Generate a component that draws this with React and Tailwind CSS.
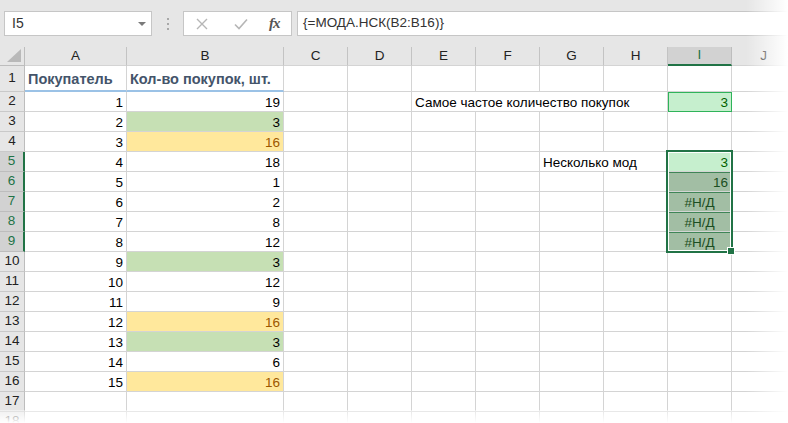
import React from "react";

const COLS = [
  { k: "A", w: 102 },
  { k: "B", w: 157 },
  { k: "C", w: 64 },
  { k: "D", w: 64 },
  { k: "E", w: 64 },
  { k: "F", w: 64 },
  { k: "G", w: 64 },
  { k: "H", w: 64 },
  { k: "I", w: 64 },
  { k: "J", w: 64 },
];

const DATA = [
  // [rowNo, A, B, Bstyle]
  [2, 1, 19, ""],
  [3, 2, 3, "g"],
  [4, 3, 16, "y"],
  [5, 4, 18, ""],
  [6, 5, 1, ""],
  [7, 6, 2, ""],
  [8, 7, 8, ""],
  [9, 8, 12, ""],
  [10, 9, 3, "g"],
  [11, 10, 12, ""],
  [12, 11, 9, ""],
  [13, 12, 16, "y"],
  [14, 13, 3, "g"],
  [15, 14, 6, ""],
  [16, 15, 16, "y"],
  [17, "", "", ""],
  [18, "", "", ""],
];

const base =
  "shrink-0 h-full border-r border-b border-[#d4d4d4] flex items-end pb-[1px] px-[3px] leading-[15px] text-[13.5px] whitespace-nowrap";

function Cell({ w, className = "", children }) {
  return (
    <div className={`${base} ${className}`} style={{ width: w }}>
      {children}
    </div>
  );
}

function RowHeader({ n, selected }) {
  return (
    <div
      className={
        selected
          ? "shrink-0 w-[25px] h-full flex items-center justify-center bg-[#d2d2d2] text-[#217346] border-b border-[#bdbdbd] border-r-2 border-r-[#217346] text-[13.5px]"
          : "shrink-0 w-[25px] h-full flex items-center justify-center bg-[#e6e6e6] text-[#222] border-b border-[#c9c9c9] border-r border-r-[#bdbdbd] text-[13.5px]"
      }
    >
      {n}
    </div>
  );
}

function DataRow({ row }) {
  const [n, a, b, st] = row;
  const sel = n >= 5 && n <= 9;
  const bCls =
    st === "g"
      ? "bg-[#c6e0b4] text-black justify-end"
      : st === "y"
      ? "bg-[#ffe89c] text-[#9c5700] justify-end"
      : "text-black justify-end";
  const cells = [
    <Cell key="A" w={102} className="justify-end text-black">
      {a}
    </Cell>,
    <Cell key="B" w={157} className={bCls}>
      {b}
    </Cell>,
    <Cell key="C" w={64} />,
    <Cell key="D" w={64} />,
  ];
  if (n === 2) {
    cells.push(
      <Cell key="E" w={256} className="text-black">
        Самое частое количество покупок
      </Cell>
    );
  } else if (n === 5) {
    cells.push(<Cell key="E" w={64} />, <Cell key="F" w={64} />);
    cells.push(
      <Cell key="G" w={128} className="text-black">
        Несколько мод
      </Cell>
    );
  } else {
    cells.push(
      <Cell key="E" w={64} />,
      <Cell key="F" w={64} />,
      <Cell key="G" w={64} />,
      <Cell key="H" w={64} />
    );
  }
  // column I
  if (n === 2) {
    cells.push(
      <Cell
        key="I"
        w={64}
        className="justify-end bg-[#c6efce] text-[#006100] outline outline-1 outline-[#2fb35a] -outline-offset-1"
      >
        3
      </Cell>
    );
  } else if (n === 5) {
    cells.push(
      <Cell key="I" w={64} className="justify-end bg-[#c6efce] text-[#006100]">
        3
      </Cell>
    );
  } else if (n === 6) {
    cells.push(
      <Cell key="I" w={64} className="justify-end bg-[#a2bea4] text-[#1c4f22] border-t border-t-[#3f8557]">
        16
      </Cell>
    );
  } else if (n >= 7 && n <= 9) {
    cells.push(
      <Cell key="I" w={64} className="justify-center bg-[#a2bea4] text-[#1c4f22] border-t border-t-[#3f8557]">
        #Н/Д
      </Cell>
    );
  } else {
    cells.push(<Cell key="I" w={64} />);
  }
  cells.push(<Cell key="J" w={64} />);

  return (
    <div className="flex h-[20px]">
      <RowHeader n={n} selected={sel} />
      {cells}
    </div>
  );
}

export default function App() {
  return (
    <div className="relative w-[788px] h-[423px] overflow-hidden bg-white font-['Liberation_Sans',Arial,sans-serif] text-black">
      {/* Toolbar / formula bar */}
      <div className="h-[47px] bg-[#e6e6e6] flex items-start pt-[11px] pl-[4px]">
        <div className="shrink-0 w-[148px] h-[25px] bg-white border border-[#c6c6c6] flex items-center justify-between pl-[7px] pr-[4px] text-[14px] text-[#333]">
          <span>I5</span>
          <svg width="10" height="6" viewBox="0 0 10 6">
            <path d="M1 1 L9 1 L5 5 Z" fill="#7a7a7a" />
          </svg>
        </div>
        <div className="shrink-0 w-[31px] h-[25px] flex flex-col items-center justify-center gap-[3px]">
          <span className="w-[2px] h-[2px] bg-[#a8a8a8]" />
          <span className="w-[2px] h-[2px] bg-[#a8a8a8]" />
          <span className="w-[2px] h-[2px] bg-[#a8a8a8]" />
        </div>
        <div className="shrink-0 w-[109px] h-[25px] bg-white border border-[#c6c6c6] flex items-center">
          <svg className="ml-[12px]" width="12" height="12" viewBox="0 0 12 12">
            <path d="M1 1 L11 11 M11 1 L1 11" stroke="#b6b6b6" strokeWidth="1.4" fill="none" />
          </svg>
          <svg className="ml-[26px]" width="14" height="12" viewBox="0 0 14 12">
            <path d="M1 6.5 L5 10.5 L13 1.5" stroke="#b6b6b6" strokeWidth="1.6" fill="none" />
          </svg>
          <span className="ml-[21px] font-['Liberation_Serif',serif] italic font-bold text-[15px] text-[#555] leading-none tracking-[-1px]">
            fx
          </span>
        </div>
        <div className="ml-[5px] flex-1 h-[25px] bg-white border border-[#c6c6c6] border-r-0 flex items-center pl-[5px] text-[13.5px] text-[#333]">
          {"{=МОДА.НСК(B2:B16)}"}
        </div>
      </div>

      {/* Column headers */}
      <div className="flex h-[19px] bg-[#e6e6e6]">
        <div className="shrink-0 w-[25px] h-full border-r border-b border-[#bdbdbd] flex items-end justify-end pr-[3px] pb-[3px]">
          <svg width="14" height="13" viewBox="0 0 14 13">
            <path d="M14 0 L14 13 L0 13 Z" fill="#b9b9b9" />
          </svg>
        </div>
        {COLS.map((c) =>
          c.k === "I" ? (
            <div
              key={c.k}
              className="shrink-0 h-full flex items-center justify-center bg-[#d2d2d2] text-[#217346] border-r border-[#bdbdbd] border-b-2 border-b-[#217346] text-[13.5px]"
              style={{ width: c.w }}
            >
              {c.k}
            </div>
          ) : (
            <div
              key={c.k}
              className="shrink-0 h-full flex items-center justify-center text-[#222] border-r border-b border-[#c3c3c3] border-b-[#d4d4d4] text-[13.5px]"
              style={{ width: c.w }}
            >
              {c.k}
            </div>
          )
        )}
      </div>

      {/* Row 1 */}
      <div className="flex h-[26px]">
        <RowHeader n={1} />
        <div className="shrink-0 w-[102px] h-full border-r border-[#d4d4d4] border-b-2 border-b-[#9bc2e6] flex items-end pb-[2px] px-[3px] leading-[17px] text-[14.5px] font-bold text-[#44546a] whitespace-nowrap">
          Покупатель
        </div>
        <div className="shrink-0 w-[157px] h-full border-r border-[#d4d4d4] border-b-2 border-b-[#9bc2e6] flex items-end pb-[2px] px-[3px] leading-[17px] text-[14.5px] font-bold text-[#44546a] whitespace-nowrap">
          Кол-во покупок, шт.
        </div>
        {COLS.slice(2).map((c) => (
          <Cell key={c.k} w={c.w} />
        ))}
      </div>

      {DATA.map((r) => (
        <DataRow key={r[0]} row={r} />
      ))}

      {/* Selection border I5:I9 */}
      <div className="absolute left-[666px] top-[150px] w-[67px] h-[103px] border-2 border-[#217346] pointer-events-none">
        <div className="absolute inset-0 border border-white" />
      </div>
      <div className="absolute left-[727px] top-[247px] w-[8px] h-[8px] bg-[#217346] border border-white" />

      {/* Fades */}
      <div className="absolute right-0 top-0 h-full w-[42px] bg-linear-to-r from-white/0 to-white pointer-events-none" />
      <div className="absolute left-0 bottom-0 w-full h-[13px] bg-linear-to-b from-white/40 to-white pointer-events-none" />
    </div>
  );
}
